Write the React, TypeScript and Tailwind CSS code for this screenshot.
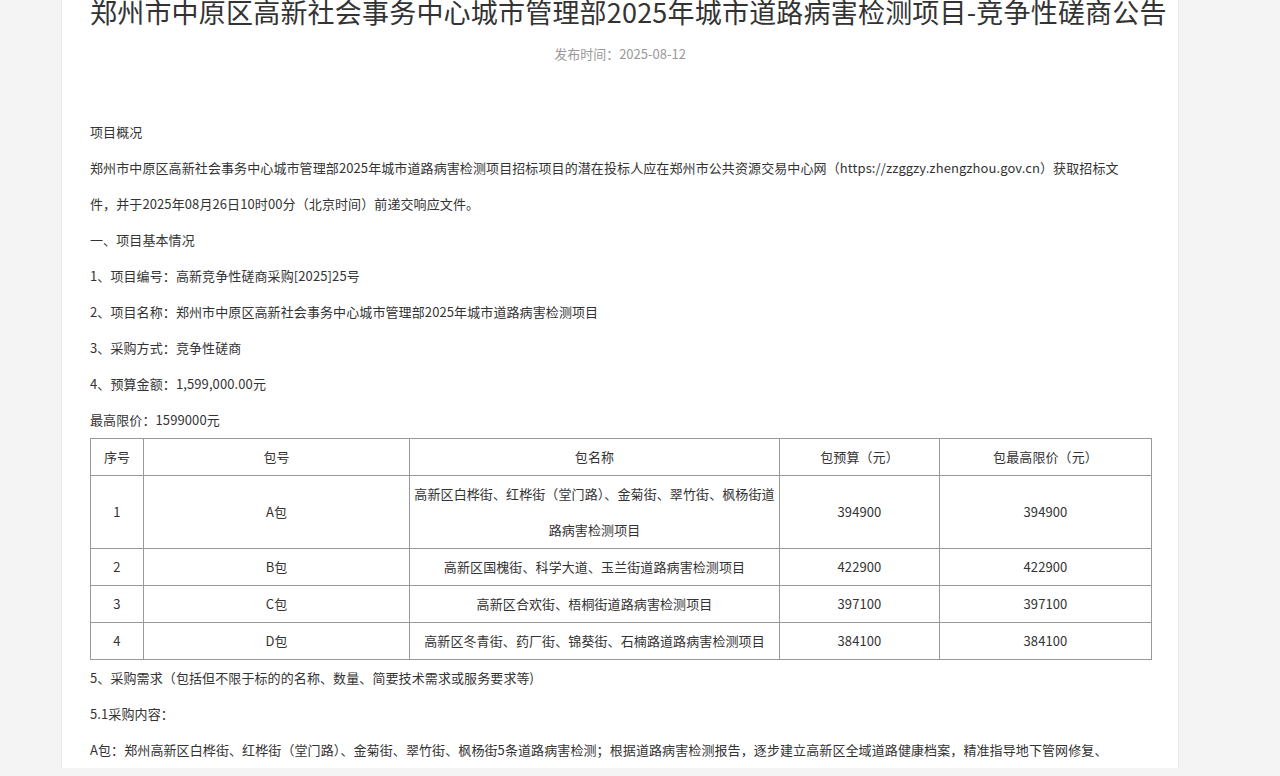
const rows = [
  ["1", "A包", "高新区白桦街、红桦街（堂门路）、金菊街、翠竹街、枫杨街道路病害检测项目", "394900", "394900"],
  ["2", "B包", "高新区国槐街、科学大道、玉兰街道路病害检测项目", "422900", "422900"],
  ["3", "C包", "高新区合欢街、梧桐街道路病害检测项目", "397100", "397100"],
  ["4", "D包", "高新区冬青街、药厂街、锦葵街、石楠路道路病害检测项目", "384100", "384100"],
]

const lines = [
  "一、项目基本情况",
  "1、项目编号：高新竞争性磋商采购[2025]25号",
  "2、项目名称：郑州市中原区高新社会事务中心城市管理部2025年城市道路病害检测项目",
  "3、采购方式：竞争性磋商",
  "4、预算金额：1,599,000.00元",
]

export default function App() {
  return (
    <div className="h-[776px] overflow-hidden bg-[#f4f4f4]" style={{ fontFamily: '"Microsoft YaHei", "Noto Sans CJK SC", sans-serif' }}>
      <div className="mx-[61px] w-[1118px] h-full bg-white border-x border-[#e8e8e8] px-[28px]">
        <h1 className="mt-[-8px] text-center text-[27px] leading-[40px] text-[#333] tracking-[0.2px] whitespace-nowrap">
          郑州市中原区高新社会事务中心城市管理部2025年城市道路病害检测项目-竞争性磋商公告
        </h1>
        <div className="mt-[12px] text-center text-[13px] text-[#999]">发布时间：2025-08-12</div>
        <div className="mt-[50px] text-[13px] leading-[36px] text-[#333] tracking-[0.1px]">
          <p>项目概况</p>
          <p className="pr-[14px]">
            郑州市中原区高新社会事务中心城市管理部2025年城市道路病害检测项目招标项目的潜在投标人应在郑州市公共资源交易中心网（https://zzggzy.zhengzhou.gov.cn）获取招标文件，并于2025年08月26日10时00分（北京时间）前递交响应文件。
          </p>
          {lines.map((l) => (
            <p key={l}>{l}</p>
          ))}
          <p>最高限价：1599000元</p>
          <table className="w-[1062px] border-collapse text-center">
            <thead>
              <tr className="h-[36px]">
                <th className="w-[53px] border border-[#999] font-normal">序号</th>
                <th className="w-[266px] border border-[#999] font-normal">包号</th>
                <th className="w-[370px] border border-[#999] font-normal">包名称</th>
                <th className="w-[160px] border border-[#999] font-normal">包预算（元）</th>
                <th className="border border-[#999] font-normal">包最高限价（元）</th>
              </tr>
            </thead>
            <tbody>
              {rows.map((r) => (
                <tr key={r[0]}>
                  {r.map((c, i) => (
                    <td key={i} className="border border-[#999] px-[3px] leading-[36px]">{c}</td>
                  ))}
                </tr>
              ))}
            </tbody>
          </table>
          <p>5、采购需求（包括但不限于标的的名称、数量、简要技术需求或服务要求等)</p>
          <p>5.1采购内容：</p>
          <p className="whitespace-nowrap">A包：郑州高新区白桦街、红桦街（堂门路）、金菊街、翠竹街、枫杨街5条道路病害检测；根据道路病害检测报告，逐步建立高新区全域道路健康档案，精准指导地下管网修复、</p>
        </div>
      </div>
    </div>
  )
}
